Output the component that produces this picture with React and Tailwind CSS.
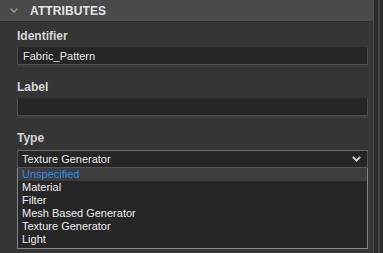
import React from 'react';

const Field = ({ label, value, mt }) => (
    <div className={mt}>
        <div className="h-[20px] leading-[20px] text-[12px] font-bold text-[#d6d6d6]">{label}</div>
        <div className="mt-[1px] h-[18px] bg-[#262626] border border-[#4e4e4e] border-t-[#2a2a2a] shadow-[0_2px_0_#3f3f3f] pl-[5px] leading-[16px] text-[11px] text-[#e6e6e6]">
            {value}
        </div>
    </div>
);

const App = () => {
    const options = ['Unspecified', 'Material', 'Filter', 'Mesh Based Generator', 'Texture Generator', 'Light'];

    return (
        <div className="w-[383px] h-[253px] overflow-hidden bg-[#353535] flex" style={{ fontFamily: '"Liberation Sans", Arial, sans-serif' }}>
            <div className="w-[373px]">
                <div className="h-[22px] bg-[#4a4a4a] border-b border-[#2e2e2e] flex items-center">
                    <svg className="ml-[10px] w-[8px] h-[5px]" viewBox="0 0 8 5" fill="none">
                        <path d="M0.5 0.5 L4 4 L7.5 0.5" stroke="#9c9c9c" strokeWidth="1.3" />
                    </svg>
                    <span className="ml-[12px] text-[12px] font-bold text-[#e4e4e4] tracking-[0.1px]">ATTRIBUTES</span>
                </div>
                <div className="pl-[17px] pr-[5px] pt-[4px]">
                    <Field label="Identifier" value="Fabric_Pattern" mt="" />
                    <Field label="Label" value="" mt="mt-[12px]" />
                    <div className="mt-[12px]">
                        <div className="h-[20px] leading-[20px] text-[12px] font-bold text-[#d6d6d6]">Type</div>
                        <div className="mt-[2px] h-[18px] bg-[#262626] border border-[#555] border-t-[#6a6a6a] pl-[4px] pr-[6px] flex items-center justify-between text-[11px] text-[#e6e6e6]">
                            <span>Texture Generator</span>
                            <svg className="w-[9px] h-[6px]" viewBox="0 0 9 6" fill="none">
                                <path d="M0.8 0.8 L4.5 4.6 L8.2 0.8" stroke="#d4d4d4" strokeWidth="1.8" />
                            </svg>
                        </div>
                        <div className="h-[81px] bg-[#262626] border border-[#858585] border-t-0">
                            {options.map((opt, i) => (
                                <div
                                    key={opt}
                                    className={
                                        i === 0
                                            ? 'h-[13px] leading-[13px] pl-[4px] text-[11px] bg-[#3d3d3d] text-[#3f86d6]'
                                            : 'h-[13px] leading-[13px] pl-[4px] text-[11px] text-[#ececec]'
                                    }
                                >
                                    {opt}
                                </div>
                            ))}
                        </div>
                    </div>
                </div>
            </div>
            <div className="w-[10px] flex">
                <div className="w-[1px] bg-[#4c4c4c]"></div>
                <div className="w-[4px] bg-[#2c2c2c]"></div>
                <div className="w-[2px] bg-[#444]"></div>
                <div className="w-[3px] bg-[#2a2a2a]"></div>
            </div>
        </div>
    );
};

export default App;
